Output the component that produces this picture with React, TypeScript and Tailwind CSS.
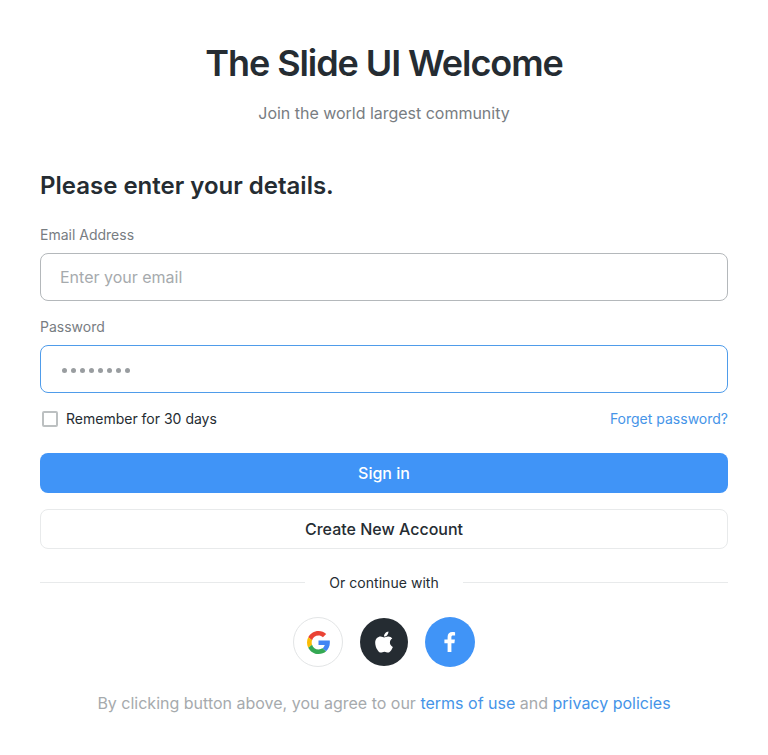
import { FaApple } from "react-icons/fa";

function GoogleLogo() {
  return (
    <svg width="23" height="23" viewBox="0 0 48 48" aria-hidden="true">
      <path fill="#EA4335" d="M24 9.5c3.54 0 6.71 1.22 9.21 3.6l6.85-6.85C35.9 2.38 30.47 0 24 0 14.62 0 6.51 5.38 2.56 13.22l7.98 6.19C12.43 13.72 17.74 9.5 24 9.5z" />
      <path fill="#4285F4" d="M47.5 19.8H24v9.4h12.94c-.58 2.78-2.26 5.3-4.78 7l7.73 6c4.51-4.18 7.8-10.36 7.8-17.65 0-1.7-.05-3.3-.19-4.75z" />
      <path fill="#FBBC05" d="M10.53 28.59c-.48-1.45-.76-2.99-.76-4.59s.27-3.14.76-4.59l-7.98-6.19C.92 16.46 0 20.12 0 24c0 3.88.92 7.54 2.56 10.78l7.97-6.19z" />
      <path fill="#34A853" d="M24 48c6.48 0 11.93-2.13 15.89-5.81l-7.73-6c-2.15 1.45-4.92 2.3-8.16 2.3-6.26 0-11.57-4.22-13.47-9.91l-7.98 6.19C6.51 42.62 14.62 48 24 48z" />
    </svg>
  );
}

function FacebookLogo() {
  return (
    <svg width="12" height="20" viewBox="0 0 12 20" fill="currentColor" aria-hidden="true">
      <path d="M7.4 20v-8.8h3l.5-3.6H7.4V5.3c0-1 .3-1.7 1.8-1.7h1.9V.3C10.8.2 9.600 0 8.300 0 5.500 0 3.600 1.700 3.600 4.900v2.700H.4v3.600h3.200V20z" />
    </svg>
  );
}

export default function App() {
  return (
    <main className="flex h-[755px] w-[768px] flex-col overflow-hidden bg-white px-10 pt-10 font-['Inter',sans-serif] text-[#252c32]">
      <header className="flex flex-col items-center whitespace-nowrap">
        <h1 className="h-[46px] text-[36px] leading-[46px] font-semibold tracking-[-1.08px]">The Slide UI Welcome</h1>
        <p className="mt-[15px] text-base leading-6 tracking-[-0.02px] text-[#787d82]">Join the world largest community</p>
      </header>

      <form className="mt-[45px] flex flex-col" onSubmit={(e) => e.preventDefault()}>
        <h2 className="text-2xl leading-8 font-semibold">Please enter your details.</h2>

        <label htmlFor="email" className="mt-[23px] text-sm leading-5 text-[#787d82]">Email Address</label>
        <input id="email" type="email" placeholder="Enter your email" className="mt-2 h-12 rounded-lg border border-[#b4b8bb] px-[19px] text-base outline-none placeholder:text-[#a6aaad]" />

        <label htmlFor="password" className="mt-4 text-sm leading-5 text-[#787d82]">Password</label>
        <div id="password" className="mt-2 flex h-12 items-center gap-1 rounded-lg border border-[#4f9cea] px-[21px] pt-0.5">
          {Array.from({ length: 8 }, (_, i) => (
            <span key={i} className="size-[5px] rounded-full bg-[#999da0]" />
          ))}
        </div>

        <div className="mt-4 flex h-5 items-center text-sm leading-5">
          <span className="ml-[2px] size-4 rounded-[2px] border-2 border-[#bcc0c1]" />
          <span className="ml-2">Remember for 30 days</span>
          <a href="#" className="ml-auto text-[#4594e8]">Forget password?</a>
        </div>

        <button className="mt-6 h-10 rounded-lg bg-[#4094f7] text-base font-medium text-white">Sign in</button>
        <button type="button" className="mt-4 h-10 rounded-lg border border-[#e8eaeb] text-base font-medium">Create New Account</button>
      </form>

      <div className="mt-6 flex h-5 items-center gap-6 text-sm leading-5">
        <span className="mb-px h-px flex-1 bg-[#e8eaeb]" />
        <span className="tracking-[0.04px]">Or continue with</span>
        <span className="mb-px h-px flex-1 bg-[#e8eaeb]" />
      </div>

      <div className="mt-[24px] flex h-[50px] items-center justify-center">
        <button aria-label="Google" className="flex size-[50px] items-center justify-center rounded-full border border-[#e3e5e6]">
          <GoogleLogo />
        </button>
        <button aria-label="Apple" className="mr-[17px] mb-px ml-[17px] flex size-[48px] items-center justify-center rounded-full bg-[#252c32] text-white">
          <FaApple size={24} />
        </button>
        <button aria-label="Facebook" className="flex size-[50px] items-center justify-center rounded-full bg-[#4094f7] text-white">
          <FacebookLogo />
        </button>
      </div>

      <p className="mt-6 text-center text-base leading-6 whitespace-nowrap text-[#a6aaad]">
        By clicking button above, you agree to our <a href="#" className="text-[#4594e8]">terms of use</a> and <a href="#" className="text-[#4594e8]">privacy policies</a>
      </p>
    </main>
  );
}
